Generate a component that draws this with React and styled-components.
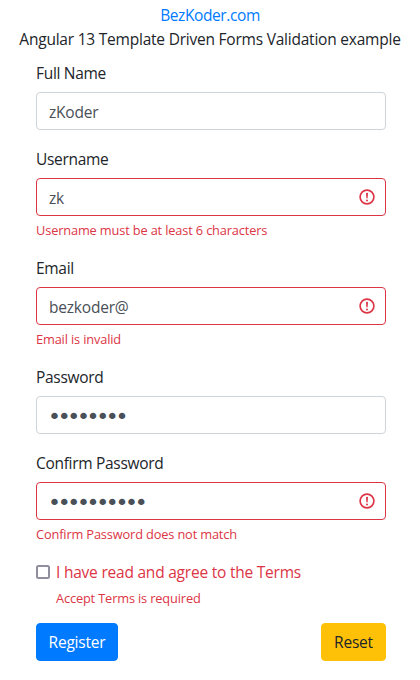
import React from 'react';
import styled, { createGlobalStyle } from 'styled-components';

const colors = {
  text: '#212529',
  inputText: '#495057',
  border: '#ced4da',
  danger: '#dc3545',
  primary: '#007bff',
  warning: '#ffc107',
};

const GlobalStyle = createGlobalStyle`
  * {
    box-sizing: border-box;
  }
  body {
    margin: 0;
    background: #fff;
    color: ${colors.text};
    font-family: "Open Sans", "Noto Sans", sans-serif;
    font-size: 15.5px;
    line-height: 24px;
  }
`;

const Page = styled.div`
  width: 420px;
  padding-top: 3px;
`;

const Header = styled.header`
  text-align: center;
  height: 57px;
`;

const SiteLink = styled.a`
  display: block;
  color: ${colors.primary};
  text-decoration: none;
  letter-spacing: -0.4px;
`;

const Title = styled.h1`
  margin: 0;
  font-size: 15.5px;
  font-weight: 400;
  letter-spacing: -0.22px;
  white-space: nowrap;
`;

const Form = styled.form`
  margin: 0 34px 0 36px;
`;

const Group = styled.div`
  margin-bottom: 16px;
`;

const Label = styled.label`
  display: block;
  padding-top: 1px;
  height: 24px;
  margin-bottom: 8px;
  letter-spacing: -0.3px;
`;

const InputWrap = styled.div`
  position: relative;
`;

const Input = styled.input`
  display: block;
  width: 100%;
  height: 38px;
  padding: 7px 12px 5px;
  border: 1px solid ${(p) => (p.$invalid ? colors.danger : colors.border)};
  border-radius: 4px;
  background: #fff;
  color: ${colors.inputText};
  font: inherit;
  letter-spacing: -0.2px;
  outline: none;

  &[type='password'] {
    padding: 3px 11px 0;
    font-family: "DejaVu Sans", sans-serif;
    font-size: 22px;
    letter-spacing: -3.35px;
  }
`;

const InvalidIcon = styled.svg`
  position: absolute;
  top: 10px;
  right: 10px;
  width: 18px;
  height: 18px;
`;

const ErrorText = styled.div`
  margin-top: 4px;
  height: 19.2px;
  padding-top: 1px;
  padding-left: ${(p) => (p.$indent ? '20px' : '0')};
  color: ${colors.danger};
  font-size: 12.8px;
  line-height: 19.2px;
  letter-spacing: -0.15px;
`;

const CheckRow = styled.label`
  display: flex;
  align-items: center;
  gap: 6px;
  color: ${colors.danger};
  letter-spacing: -0.22px;
`;

const CheckBox = styled.input`
  appearance: none;
  flex: none;
  width: 14px;
  height: 14px;
  margin: 0;
  background: #fff;
  border: 2px solid #8f8f9d;
  border-radius: 2.5px;
`;

const Actions = styled.div`
  display: flex;
  justify-content: space-between;
`;

const Button = styled.button`
  width: ${(p) => p.$width}px;
  height: 38px;
  padding: 1px 0 0;
  border: 1px solid ${(p) => p.$bg};
  border-radius: 4px;
  background: ${(p) => p.$bg};
  color: ${(p) => p.$fg};
  font: inherit;
  letter-spacing: -0.2px;
`;

const ExclamationCircle = () => (
  <InvalidIcon viewBox="0 0 12 12" fill="none" stroke={colors.danger} strokeWidth="1.1">
    <circle cx="6" cy="6" r="4.6" />
    <path d="M5.8 3.6h.4L6 6.5z" strokeWidth=".9" strokeLinejoin="round" />
    <circle cx="6" cy="8.3" r=".65" fill={colors.danger} stroke="none" />
  </InvalidIcon>
);

const Field = ({ label, type = 'text', value, error }) => (
  <Group>
    <Label>{label}</Label>
    <InputWrap>
      <Input type={type} defaultValue={value} $invalid={!!error} />
      {error && <ExclamationCircle />}
    </InputWrap>
    {error && <ErrorText>{error}</ErrorText>}
  </Group>
);

const App = () => {
  return (
    <Page>
      <GlobalStyle />
      <Header>
        <SiteLink href="#">BezKoder.com</SiteLink>
        <Title>Angular 13 Template Driven Forms Validation example</Title>
      </Header>
      <Form onSubmit={(e) => e.preventDefault()}>
        <Field label="Full Name" value="zKoder" />
        <Field label="Username" value="zk" error="Username must be at least 6 characters" />
        <Field label="Email" value="bezkoder@" error="Email is invalid" />
        <Field label="Password" type="password" value="12345678" />
        <Field
          label="Confirm Password"
          type="password"
          value="1234567890"
          error="Confirm Password does not match"
        />
        <Group>
          <CheckRow>
            <CheckBox type="checkbox" />I have read and agree to the Terms
          </CheckRow>
          <ErrorText $indent>Accept Terms is required</ErrorText>
        </Group>
        <Actions>
          <Button type="submit" $width={82} $bg={colors.primary} $fg="#fff">
            Register
          </Button>
          <Button type="reset" $width={65} $bg={colors.warning} $fg={colors.text}>
            Reset
          </Button>
        </Actions>
      </Form>
    </Page>
  );
};

export default App;
